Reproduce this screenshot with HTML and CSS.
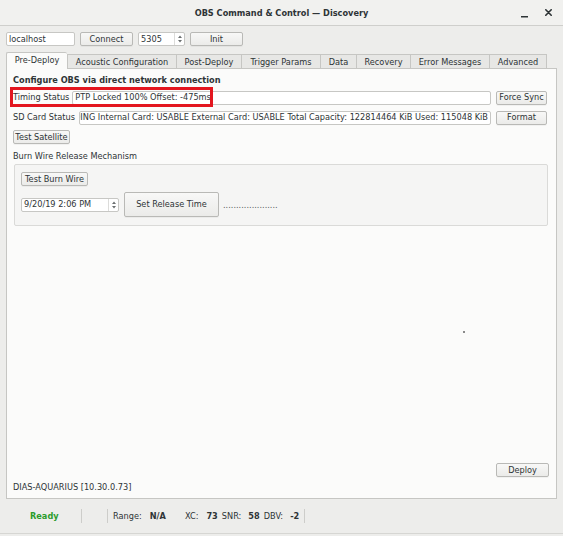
FILE: index.html
```html
<!DOCTYPE html>
<html>
<head>
<meta charset="utf-8">
<title>OBS Command &amp; Control — Discovery</title>
<link rel="stylesheet" href="styles.css">
</head>
<body>
<div class="window">
  <div class="titlebar">
    <div></div>
    <div class="title">OBS Command &amp; Control — Discovery</div>
    <div class="controls">
      <svg class="ctl-min" width="7" height="8" viewBox="0 0 7 8"><rect x="0" y="6" width="7" height="1.5" fill="#2e3436"/></svg>
      <svg class="ctl-close" width="7" height="7" viewBox="0 0 7 7"><path d="M0.8 0.8 L6.2 6.2 M6.2 0.8 L0.8 6.2" stroke="#2e3436" stroke-width="1.6" stroke-linecap="round"/></svg>
    </div>
  </div>

  <div class="content">
    <div class="toprow">
      <div class="edit host">localhost</div>
      <div class="btn w53">Connect</div>
      <div class="edit spin port">
        <span class="val">5305</span>
        <span class="arrows"><svg width="6" height="10" viewBox="0 0 6 10"><path d="M1 4 L3 1.5 L5 4 Z M1 6 L3 8.5 L5 6 Z" fill="#6b6f70"/></svg></span>
      </div>
      <div class="btn w53">Init</div>
    </div>

    <div class="tabs">
      <div class="tab active t1">Pre-Deploy</div>
      <div class="tab t2">Acoustic Configuration</div>
      <div class="tab t3">Post-Deploy</div>
      <div class="tab t4">Trigger Params</div>
      <div class="tab t5">Data</div>
      <div class="tab t6">Recovery</div>
      <div class="tab t7">Error Messages</div>
      <div class="tab t8 last">Advanced</div>
    </div>

    <div class="pane">
      <div class="heading">Configure OBS via direct network connection</div>

      <div class="row r-timing">
        <span class="lbl">Timing Status</span>
        <div class="edit grow">PTP Locked 100% Offset: -475ms</div>
        <div class="btn side">Force Sync</div>
      </div>

      <div class="row r-sd">
        <span class="lbl lbl-sd">SD Card Status</span>
        <div class="edit grow scrolled"><span>RECORDING Internal Card: USABLE External Card: USABLE Total Capacity: 122814464 KiB Used: 115048 KiB</span></div>
        <div class="btn side">Format</div>
      </div>

      <div class="row r-sat">
        <div class="btn sat">Test Satellite</div>
      </div>

      <div class="group-title">Burn Wire Release Mechanism</div>
      <div class="group">
        <div class="btn burn">Test Burn Wire</div>
        <div class="release-row">
          <div class="edit spin date">
            <span class="val">9/20/19 2:06 PM</span>
            <span class="arrows"><svg width="6" height="10" viewBox="0 0 6 10"><path d="M1 4 L3 1.5 L5 4 Z M1 6 L3 8.5 L5 6 Z" fill="#6b6f70"/></svg></span>
          </div>
          <div class="btn release">Set Release Time</div>
          <span class="dots">.....................</span>
        </div>
      </div>

      <div class="spacer"></div>

      <div class="deploy-row"><div class="btn deploy">Deploy</div></div>
      <div class="device">DIAS-AQUARIUS [10.30.0.73]</div>

      <div class="highlight"></div>
      <div class="speck"></div>
    </div>
  </div>

  <div class="statusbar">
    <span class="ready">Ready</span>
    <span class="sep s1"></span>
    <span class="sep s2"></span>
    <span class="st range">Range:</span>
    <b class="stv na">N/A</b>
    <span class="st xc">XC:</span>
    <b class="stv v73">73</b>
    <span class="st snr">SNR:</span>
    <b class="stv v58">58</b>
    <span class="st dbv">DBV:</span>
    <b class="stv vm2">-2</b>
    <span class="sep s3"></span>
  </div>
</div>
</body>
</html>
```

FILE: styles.css
```css
* { box-sizing: border-box; margin: 0; padding: 0; }

html, body { width: 563px; height: 536px; overflow: hidden; }

body {
  background: #ededeb;
  font-family: "DejaVu Sans", sans-serif;
  font-size: 8.2px;
  line-height: 1;
  color: #2e3436;
}

.window { display: flex; flex-direction: column; height: 536px; }

/* title bar */
.titlebar {
  height: 26px;
  flex: none;
  display: grid;
  grid-template-columns: 1fr auto 1fr;
  align-items: center;
  background: #f1f1ef;
  border-bottom: 1px solid #cfcfcc;
}
.title { font-weight: bold; color: #2e3436; padding-top: 1px; }
.controls {
  justify-self: end;
  display: flex;
  align-items: center;
  gap: 17px;
  padding-right: 11px;
}
.ctl-min { margin-top: 2px; }

.content { padding: 0 6px; flex: none; }

/* generic widgets */
.btn {
  height: 14px;
  display: flex;
  align-items: center;
  justify-content: center;
  background: linear-gradient(#f8f8f7, #ebebe9);
  border: 1px solid #b9b9b6;
  border-radius: 2px;
  box-shadow: 0 1px 0 rgba(0,0,0,0.04);
  color: #2e3436;
  white-space: nowrap;
  flex: none;
}
.edit {
  height: 14px;
  display: flex;
  align-items: center;
  background: #ffffff;
  border: 1px solid #c7c7c4;
  border-radius: 2px;
  padding-left: 2px;
  white-space: nowrap;
  overflow: hidden;
  flex: none;
}
.spin { padding-right: 0; }
.spin .val { flex: 1; }
.spin .arrows {
  width: 10px;
  height: 100%;
  display: flex;
  align-items: center;
  justify-content: center;
  border-left: 1px solid #dcdcda;
}

/* top row */
.toprow {
  display: flex;
  gap: 5px;
  margin-top: 6px;
  height: 14px;
}
.host { width: 69px; }
.w53 { width: 53px; }
.port { width: 47px; }

/* tabs */
.tabs {
  display: flex;
  align-items: flex-end;
  height: 16px;
  margin-top: 6px;
}
.tab {
  height: 14px;
  display: flex;
  align-items: center;
  justify-content: center;
  background: #e7e7e5;
  border-top: 1px solid #c6c6c3;
  border-left: 1px solid #c6c6c3;
  white-space: nowrap;
  padding-top: 1px;
}
.tab.last { border-right: 1px solid #c6c6c3; }
.tab.active {
  height: 17px;
  margin-bottom: -1px;
  background: #fbfbfa;
  position: relative;
  z-index: 1;
  border-radius: 2px 2px 0 0;
  padding-top: 0;
  padding-bottom: 1px;
}
.t1 { width: 61px; }
.t2 { width: 109px; }
.t3 { width: 65px; }
.t4 { width: 79px; }
.t5 { width: 36px; }
.t6 { width: 54px; }
.t7 { width: 79px; }
.t8 { width: 58px; }

/* pane */
.pane {
  position: relative;
  height: 431px;
  background: #fbfbfa;
  border: 1px solid #c6c6c3;
  padding: 6px 9px 6px 6px;
  display: flex;
  flex-direction: column;
}
.heading { font-weight: bold; height: 10px; line-height: 10px; }

.row { display: flex; align-items: center; height: 15px; }
.r-timing { margin-top: 5px; }
.r-sd { margin-top: 5px; }
.r-sat { margin-top: 5px; height: 14px; }
.lbl { margin-right: 3px; white-space: nowrap; flex: none; }
.lbl-sd { margin-right: 4px; }
.grow { flex: 1; height: 14px; min-width: 0; }
.scrolled { justify-content: flex-end; padding-right: 2px; }
.scrolled span { flex: none; }
.side { width: 51px; margin-left: 5px; }
.sat { width: 57px; }

.group-title { margin-top: 7px; height: 10px; line-height: 10px; }
.group {
  margin-top: 3px;
  margin-right: -1px;
  margin-left: 1px;
  background: #f5f5f4;
  border: 1px solid #dadad8;
  border-radius: 2px;
  padding: 7px 8px 8px 6px;
}
.burn { width: 67px; }
.release-row {
  display: flex;
  align-items: center;
  height: 25px;
  margin-top: 6px;
}
.date { width: 98px; }
.release { width: 95px; height: 25px; margin-left: 5px; }
.dots { margin-left: 4px; color: #55595a; font-size: 8.2px; letter-spacing: 0; padding-top: 2px; }

.spacer { flex: 1; }

.deploy-row { display: flex; justify-content: flex-end; margin-right: -2px; }
.deploy { width: 53px; }
.device { margin-top: 5px; height: 10px; line-height: 10px; }

.highlight {
  position: absolute;
  left: 3px;
  top: 18px;
  width: 203px;
  height: 20px;
  border: 3px solid #e3161f;
}
.speck {
  position: absolute;
  left: 456px;
  top: 262px;
  width: 2px;
  height: 2px;
  background: #8a8a8a;
}

/* status bar */
.statusbar {
  height: 35px;
  flex: none;
  display: flex;
  align-items: center;
  padding-left: 30px;
  border-bottom: 1px solid #d6d6d3;
  white-space: nowrap;
}
.ready { color: #2c9c2c; font-weight: bold; width: 29px; }
.sep { width: 1px; height: 14px; background: #cdcdca; flex: none; }
.s1 { margin-left: 22px; }
.s2 { margin-left: 25px; }
.range { margin-left: 5px; }
.stv { font-weight: bold; }
.na { margin-left: 8px; }
.xc { margin-left: 19px; }
.v73 { margin-left: 8px; }
.snr { margin-left: 4px; }
.v58 { margin-left: 7px; }
.dbv { margin-left: 4px; }
.vm2 { margin-left: 7px; }
.s3 { margin-left: 5px; }
```
